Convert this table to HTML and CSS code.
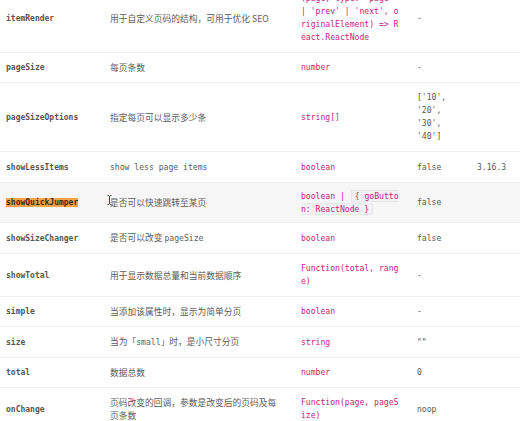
FILE: index.html
```html
<!DOCTYPE html>
<html lang="zh">
<head>
<meta charset="utf-8">
<link rel="stylesheet" href="styles.css">
</head>
<body>
<table class="api">
  <colgroup>
    <col class="c-prop"><col class="c-desc"><col class="c-type"><col class="c-def"><col class="c-ver">
  </colgroup>
  <tbody>
    <tr>
      <td class="prop">itemRender</td>
      <td class="desc">用于自定义页码的结构，可用于优化 SEO</td>
      <td class="type">(page, type: 'page' | 'prev' | 'next', originalElement) =&gt; React.ReactNode</td>
      <td class="def">-</td>
      <td class="ver"></td>
    </tr>
    <tr>
      <td class="prop">pageSize</td>
      <td class="desc">每页条数</td>
      <td class="type">number</td>
      <td class="def">-</td>
      <td class="ver"></td>
    </tr>
    <tr>
      <td class="prop">pageSizeOptions</td>
      <td class="desc">指定每页可以显示多少条</td>
      <td class="type">string[]</td>
      <td class="def wrap">['10', '20', '30', '40']</td>
      <td class="ver"></td>
    </tr>
    <tr>
      <td class="prop">showLessItems</td>
      <td class="desc"><span class="code">show less page items</span></td>
      <td class="type">boolean</td>
      <td class="def">false</td>
      <td class="ver">3.16.3</td>
    </tr>
    <tr class="hover">
      <td class="prop"><mark class="hit">showQuickJumper</mark></td>
      <td class="desc cursor-cell"><svg class="ibeam" width="5" height="10" viewBox="0 0 5 10"><path d="M0.5 0.5h1.5M3 0.5h1.5M2.5 1v8M0.5 9.5h1.5M3 9.5h1.5" stroke="#444" stroke-width="1" fill="none"/></svg>是否可以快速跳转至某页</td>
      <td class="type">boolean | <code class="box">{ goButton: ReactNode }</code></td>
      <td class="def">false</td>
      <td class="ver"></td>
    </tr>
    <tr>
      <td class="prop">showSizeChanger</td>
      <td class="desc">是否可以改变 <span class="code">pageSize</span></td>
      <td class="type">boolean</td>
      <td class="def">false</td>
      <td class="ver"></td>
    </tr>
    <tr>
      <td class="prop">showTotal</td>
      <td class="desc">用于显示数据总量和当前数据顺序</td>
      <td class="type">Function(total, range)</td>
      <td class="def">-</td>
      <td class="ver"></td>
    </tr>
    <tr>
      <td class="prop">simple</td>
      <td class="desc">当添加该属性时，显示为简单分页</td>
      <td class="type">boolean</td>
      <td class="def">-</td>
      <td class="ver"></td>
    </tr>
    <tr>
      <td class="prop">size</td>
      <td class="desc">当为「<span class="code">small</span>」时，是小尺寸分页</td>
      <td class="type">string</td>
      <td class="def">""</td>
      <td class="ver"></td>
    </tr>
    <tr>
      <td class="prop">total</td>
      <td class="desc">数据总数</td>
      <td class="type">number</td>
      <td class="def">0</td>
      <td class="ver"></td>
    </tr>
    <tr>
      <td class="prop">onChange</td>
      <td class="desc">页码改变的回调，参数是改变后的页码及每页条数</td>
      <td class="type">Function(page, pageSize)</td>
      <td class="def">noop</td>
      <td class="ver"></td>
    </tr>
  </tbody>
</table>
</body>
</html>
```
FILE: styles.css
```css
html, body {
  margin: 0;
  padding: 0;
  background: #ffffff;
  overflow: hidden;
}

.api {
  border-collapse: collapse;
  table-layout: fixed;
  width: 551px;
  margin: -16px 0 0 -2px;
  font-family: "Noto Sans CJK SC", "Noto Sans", sans-serif;
  font-size: 8.75px;
  line-height: 13px;
  color: #595959;
}

.c-prop { width: 104px; }
.c-desc { width: 191px; }
.c-type { width: 116px; }
.c-def { width: 60px; }
.c-ver { width: 80px; }

.api td {
  padding: 8px 8px;
  border-bottom: 1px solid #efefef;
  vertical-align: middle;
  text-align: left;
}

.api tr.hover td {
  background: #f6f6f6;
  padding-top: 6.5px;
  padding-bottom: 6.5px;
}

.prop {
  font-family: "DejaVu Sans Mono", "Liberation Mono", monospace;
  font-size: 8px;
  font-weight: 700;
  color: #555555;
  white-space: nowrap;
}

.desc {
  padding-right: 13px !important;
  color: #5c5c5c;
}

.code {
  font-family: "DejaVu Sans Mono", "Liberation Mono", monospace;
  font-size: 8.1px;
}

.type {
  font-family: "DejaVu Sans Mono", "Liberation Mono", monospace;
  font-size: 8.1px;
  color: #c41d7f;
  word-break: break-all;
}

.box {
  font-family: inherit;
  font-size: inherit;
  background: #f0f1f3;
  border: 1px solid #e8e8ea;
  border-radius: 2px;
  padding: 0 3px;
  margin-left: 1px;
}

.def, .ver {
  font-family: "DejaVu Sans Mono", "Liberation Mono", monospace;
  font-size: 8.1px;
  color: #595959;
  white-space: nowrap;
}

.def.wrap {
  white-space: normal;
}

.hit {
  background: #f7a349;
  color: #3a2a1a;
  padding: 0;
}

.cursor-cell {
  position: relative;
}

.ibeam {
  position: absolute;
  left: 5px;
  top: 12px;
}
```
